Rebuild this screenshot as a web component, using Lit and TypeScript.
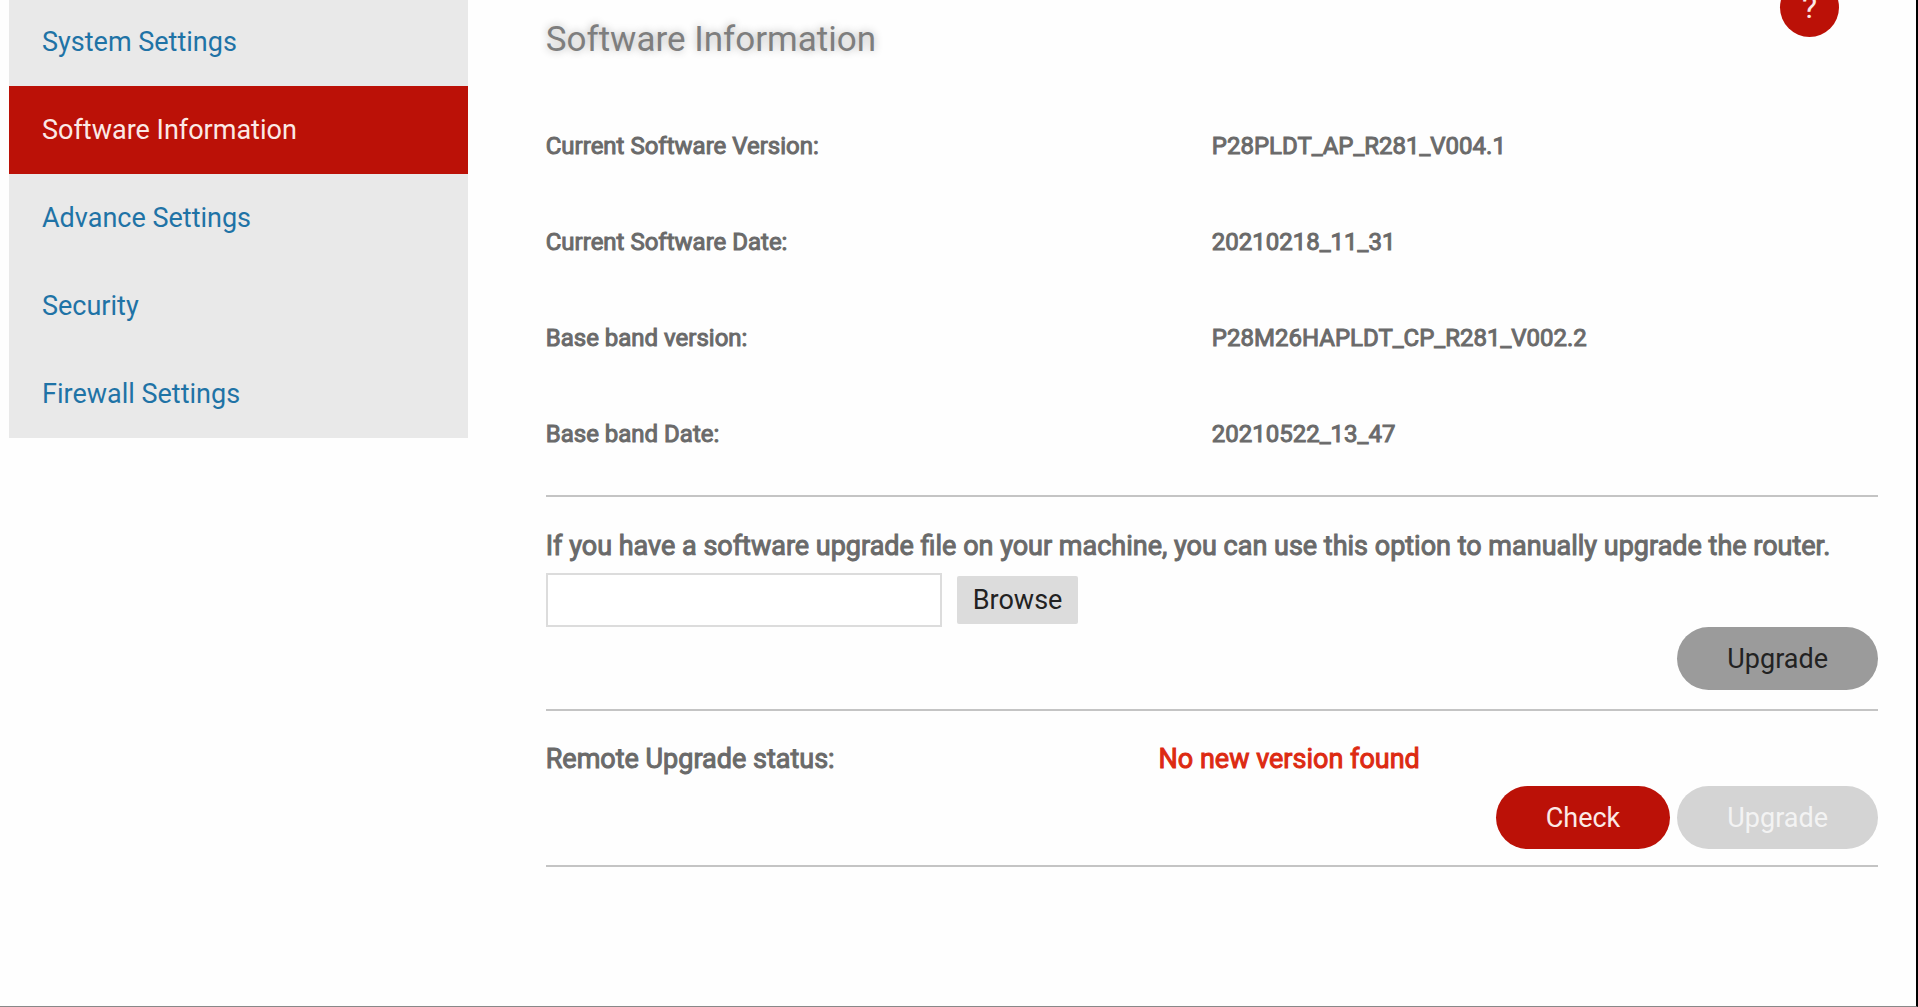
import { LitElement, html, css } from "lit";
import { customElement, state } from "lit/decorators.js";
import { classMap } from "lit/directives/class-map.js";

const SECTIONS = [
  "System Settings",
  "Software Information",
  "Advance Settings",
  "Security",
  "Firewall Settings",
];

const VERSIONS: Array<[string, string]> = [
  ["Current Software Version:", "P28PLDT_AP_R281_V004.1"],
  ["Current Software Date:", "20210218_11_31"],
  ["Base band version:", "P28M26HAPLDT_CP_R281_V002.2"],
  ["Base band Date:", "20210522_13_47"],
];

@customElement("side-menu")
export class SideMenu extends LitElement {
  static styles = css`
    :host {
      display: block;
    }
    .menu {
      display: flex;
      flex-direction: column;
      background: #e9e9e9;
    }
    .link {
      padding: 0 33px;
      line-height: 88px;
      font-size: 27px;
      color: #1f73a6;
      text-decoration: none;
    }
    .active {
      background: #bb1107;
      color: #fbe9e6;
    }
  `;

  @state() private current = "Software Information";

  private select(event: Event, name: string) {
    event.preventDefault();
    this.current = name;
  }

  render() {
    return html`
      <nav class="menu" aria-label="Settings">
        ${SECTIONS.map(
          (name) => html`<a
            class=${classMap({ link: true, active: name === this.current })}
            href="#${name.toLowerCase().replace(" ", "-")}"
            @click=${(event: Event) => this.select(event, name)}
            >${name}</a
          >`
        )}
      </nav>
    `;
  }
}

@customElement("software-panel")
export class SoftwarePanel extends LitElement {
  static styles = css`
    :host {
      display: block;
      color: #6a6a6a;
    }
    .title {
      margin: 0;
      font-size: 35px;
      font-weight: 400;
      line-height: 44px;
      color: #7e7e7e;
      text-shadow: 0 0 8px rgba(0, 0, 0, 0.3);
    }
    .strong {
      -webkit-text-stroke: 1px currentColor;
    }
    .versions {
      width: 100%;
      margin-top: 36px;
      border-collapse: collapse;
      table-layout: fixed;
      font-size: 24px;
    }
    .cell {
      height: 96px;
      padding: 0;
      font-weight: 400;
      text-align: left;
    }
    .section {
      border-top: 2px solid #c4c4c4;
    }
    .manual {
      display: flex;
      flex-direction: column;
      margin-top: 13px;
      padding: 31px 0 19px;
    }
    .hint {
      font-size: 27px;
      line-height: 36px;
    }
    .picker {
      display: flex;
      align-items: center;
      gap: 15px;
      margin-top: 9px;
    }
    .file {
      box-sizing: border-box;
      width: 396px;
      height: 54px;
      border: 2px solid #dcdcdc;
      background: #fff;
      font: 27px Roboto, sans-serif;
    }
    .browse {
      height: 48px;
      padding: 0 16px;
      border: 0;
      border-radius: 2px;
      background: #dcdcdc;
      color: #222;
      font: 27px Roboto, sans-serif;
    }
    .actions {
      display: flex;
      justify-content: flex-end;
      gap: 7px;
    }
    .pill {
      height: 63px;
      padding: 0 50px;
      border: 0;
      border-radius: 32px;
      font: 27px Roboto, sans-serif;
    }
    .grey {
      background: #9b9b9b;
      color: #222;
    }
    .red {
      background: #bb1107;
      color: #fbe9e6;
    }
    .faded {
      background: #d4d4d4;
      color: #f3f3f3;
    }
    .remote {
      padding: 30px 0 16px;
      border-bottom: 2px solid #c4c4c4;
    }
    .status {
      display: grid;
      grid-template-columns: 46% 1fr;
      margin-bottom: 9px;
      font-size: 27px;
      line-height: 36px;
    }
    .result {
      color: #dd2a12;
    }
  `;

  render() {
    return html`
      <h1 class="title">Software Information</h1>
      <table class="versions strong">
        <tbody>
          ${VERSIONS.map(
            ([label, value]) => html`<tr>
              <th class="cell" scope="row">${label}</th>
              <td class="cell">${value}</td>
            </tr>`
          )}
        </tbody>
      </table>
      <form class="section manual" @submit=${(e: Event) => e.preventDefault()}>
        <label class="hint strong" for="file"
          >If you have a software upgrade file on your machine, you can use this
          option to manually upgrade the router.</label
        >
        <div class="picker">
          <input class="file" id="file" type="text" />
          <button class="browse" type="button">Browse</button>
        </div>
        <div class="actions">
          <button class="pill grey" type="submit">Upgrade</button>
        </div>
      </form>
      <section class="section remote">
        <div class="status strong">
          <span>Remote Upgrade status:</span>
          <span class="result" role="status">No new version found</span>
        </div>
        <div class="actions">
          <button class="pill red" type="button">Check</button>
          <button class="pill faded" type="button" disabled>Upgrade</button>
        </div>
      </section>
    `;
  }
}

@customElement("app-root")
export class AppRoot extends LitElement {
  static styles = css`
    :host {
      display: block;
      box-sizing: border-box;
      position: relative;
      min-height: 100vh;
      overflow: hidden;
      border-right: 2px solid #000;
      border-bottom: 1px solid #888;
      background: #fefefe;
      font-family: Roboto, sans-serif;
    }
    .page {
      display: grid;
      grid-template-columns: minmax(0, 459fr) minmax(0, 1333fr);
      align-items: start;
      column-gap: 78px;
      padding: 0 38px 0 9px;
    }
    .menu {
      margin-top: -2px;
    }
    .panel {
      padding-top: 18px;
    }
    .help {
      position: absolute;
      top: -22px;
      right: 77px;
      width: 59px;
      height: 59px;
      padding: 0;
      border: 0;
      border-radius: 50%;
      background: #bb1107;
      color: #fbe9e6;
      font: 32px/59px Roboto, sans-serif;
    }
  `;

  render() {
    return html`
      <main class="page">
        <side-menu class="menu"></side-menu>
        <software-panel class="panel"></software-panel>
      </main>
      <button class="help" type="button">?</button>
    `;
  }
}
